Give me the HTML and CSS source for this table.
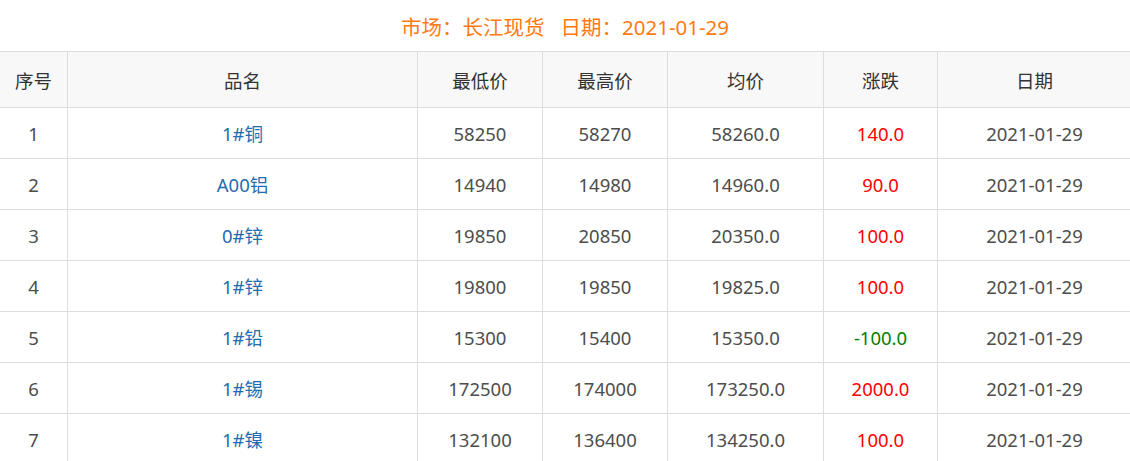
FILE: index.html
```html
<!DOCTYPE html>
<html lang="zh-CN">
<head>
<meta charset="utf-8">
<title>长江现货</title>
<link rel="stylesheet" href="styles.css">
</head>
<body>
<div class="page">
  <h2 class="title">市场：长江现货&nbsp;&nbsp;&nbsp;日期：2021-01-29</h2>
  <table class="price-table">
    <colgroup>
      <col class="c1"><col class="c2"><col class="c3"><col class="c4"><col class="c5"><col class="c6"><col class="c7">
    </colgroup>
    <thead>
      <tr><th>序号</th><th>品名</th><th>最低价</th><th>最高价</th><th>均价</th><th>涨跌</th><th>日期</th></tr>
    </thead>
    <tbody>
      <tr><td>1</td><td><a class="name">1#铜</a></td><td>58250</td><td>58270</td><td>58260.0</td><td class="up">140.0</td><td>2021-01-29</td></tr>
      <tr><td>2</td><td><a class="name">A00铝</a></td><td>14940</td><td>14980</td><td>14960.0</td><td class="up">90.0</td><td>2021-01-29</td></tr>
      <tr><td>3</td><td><a class="name">0#锌</a></td><td>19850</td><td>20850</td><td>20350.0</td><td class="up">100.0</td><td>2021-01-29</td></tr>
      <tr><td>4</td><td><a class="name">1#锌</a></td><td>19800</td><td>19850</td><td>19825.0</td><td class="up">100.0</td><td>2021-01-29</td></tr>
      <tr><td>5</td><td><a class="name">1#铅</a></td><td>15300</td><td>15400</td><td>15350.0</td><td class="down">-100.0</td><td>2021-01-29</td></tr>
      <tr><td>6</td><td><a class="name">1#锡</a></td><td>172500</td><td>174000</td><td>173250.0</td><td class="up">2000.0</td><td>2021-01-29</td></tr>
      <tr><td>7</td><td><a class="name">1#镍</a></td><td>132100</td><td>136400</td><td>134250.0</td><td class="up">100.0</td><td>2021-01-29</td></tr>
    </tbody>
  </table>
</div>
</body>
</html>
```
FILE: styles.css
```css
html, body {
  margin: 0;
  padding: 0;
  background: #fff;
}
body {
  font-family: "Noto Sans", "Noto Sans CJK SC", sans-serif;
  overflow: hidden;
}
.page {
  width: 1130px;
}
.title {
  margin: 0;
  height: 51px;
  line-height: 54px;
  text-align: center;
  font-size: 20.5px;
  font-weight: normal;
  color: #ff7a10;
}
.price-table {
  border-collapse: collapse;
  table-layout: fixed;
  width: 1132px;
  margin-left: -1px;
}
.c1 { width: 68px; }
.c2 { width: 350px; }
.c3 { width: 125px; }
.c4 { width: 125px; }
.c5 { width: 156px; }
.c6 { width: 114px; }
.c7 { width: 194px; }
.price-table th,
.price-table td {
  border: 1px solid #dddddd;
  text-align: center;
  font-size: 18.5px;
  font-weight: normal;
  padding: 0;
}
.price-table th {
  height: 55px;
  background: #f8f8f8;
  color: #333;
}
.price-table td {
  height: 50px;
  color: #4d4d4d;
}
.name {
  color: #1f6cae;
  text-decoration: none;
}
.up { color: #ff0000 !important; }
.down { color: #008000 !important; }
```
